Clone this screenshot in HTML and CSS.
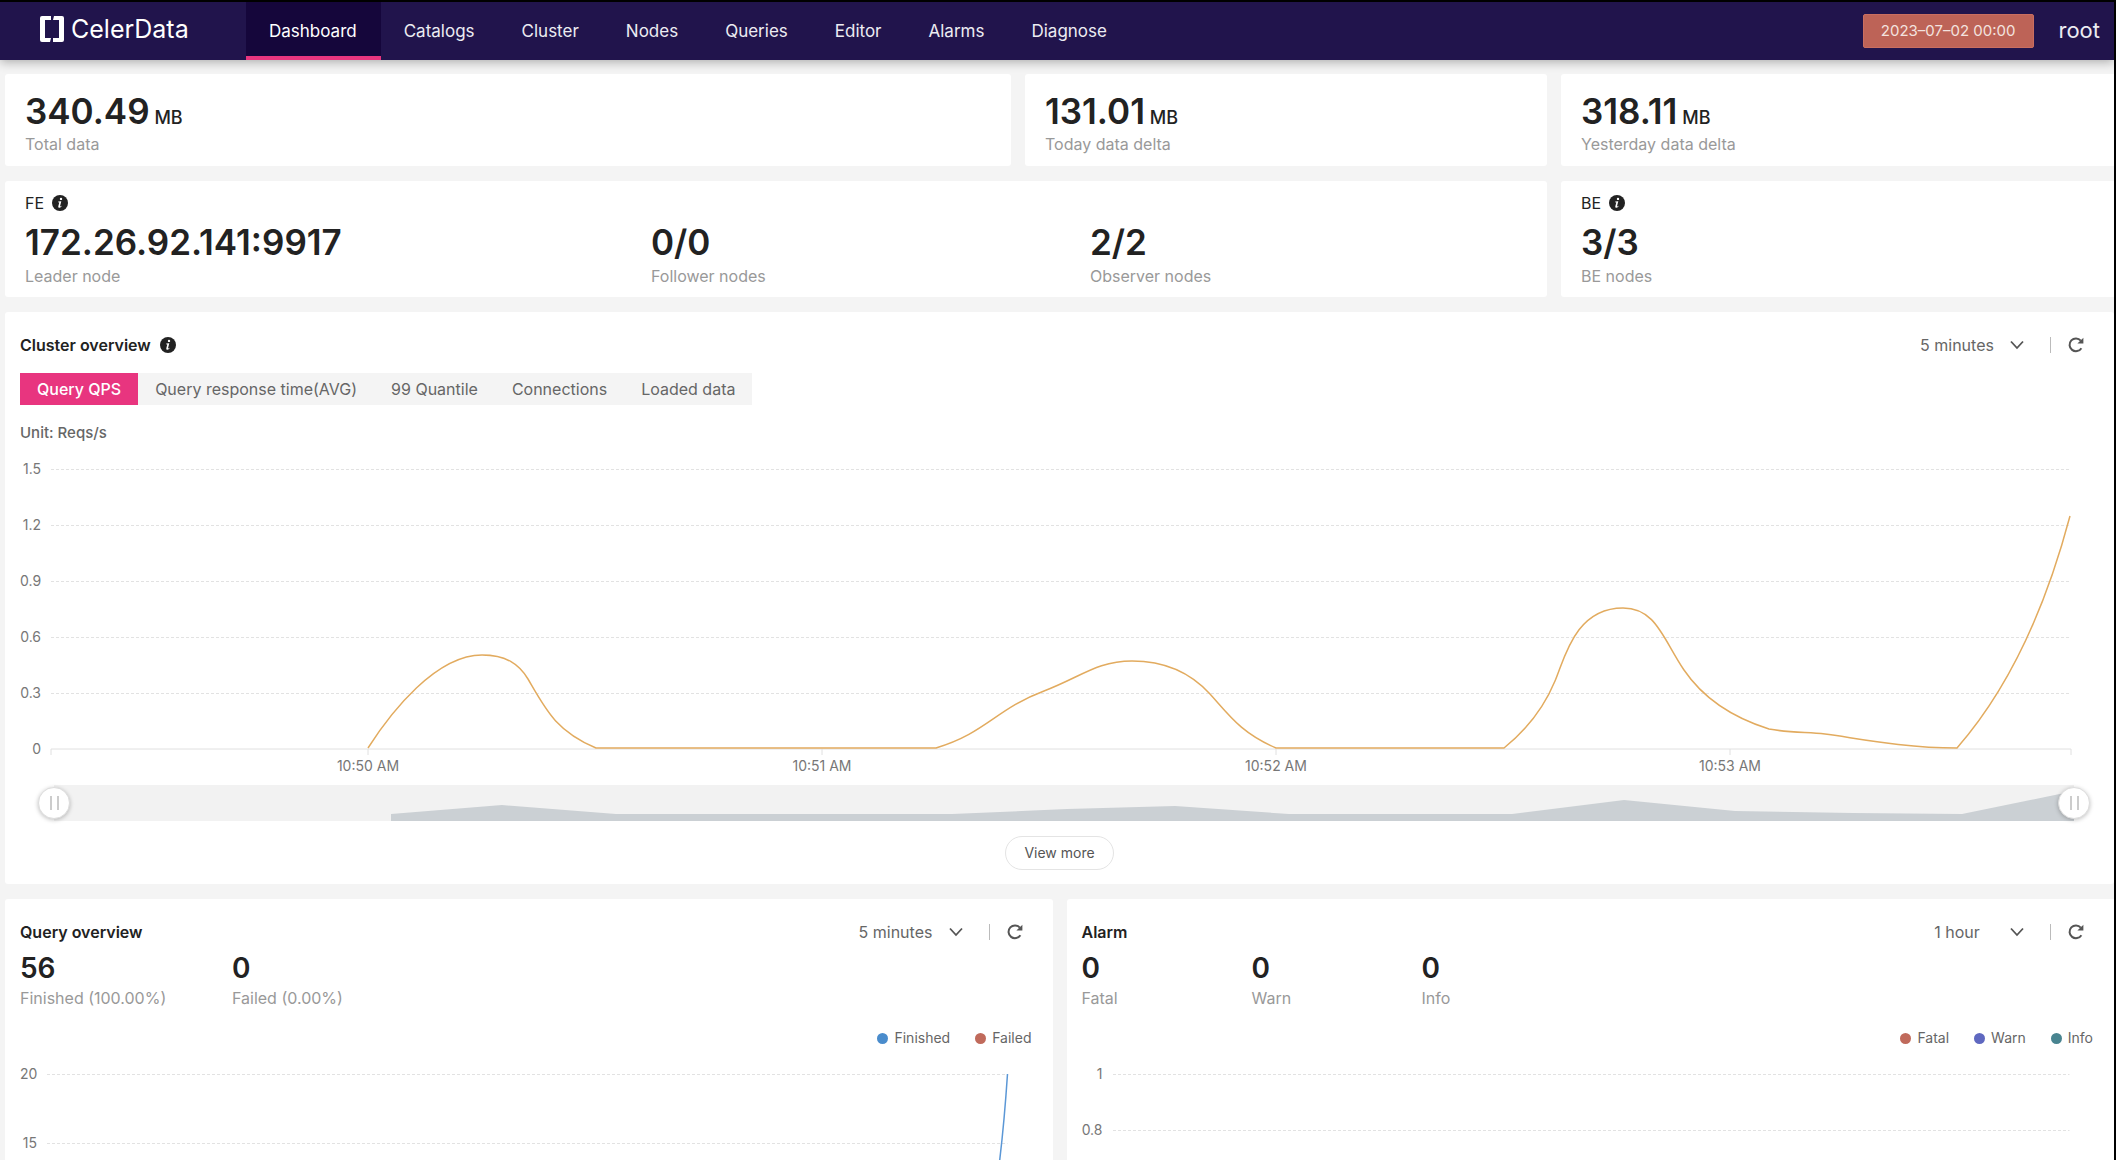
FILE: index.html
```html
<!DOCTYPE html>
<html lang="en">
<head>
<meta charset="utf-8">
<title>CelerData Dashboard</title>
<link rel="stylesheet" href="styles.css">
</head>
<body>
<svg class="defs" aria-hidden="true">
  <symbol id="i-info" viewBox="0 0 16 16">
    <circle cx="8" cy="8" r="8" fill="#222"/>
    <circle cx="9" cy="3.9" r="1.2" fill="#fff"/>
    <path d="M6.3 6.6L9.3 6.3L8 11.2Q8 11.7 9.4 10.8L9.6 11.2Q8.2 12.9 6.9 12.7Q6 12.4 6.3 11.2L7.3 7.4L6.1 7.2Z" fill="#fff"/>
  </symbol>
  <symbol id="i-chevron" viewBox="0 0 14 10">
    <path d="M1 1.5L7 8L13 1.5" fill="none" stroke="#555" stroke-width="1.8"/>
  </symbol>
  <symbol id="i-refresh" viewBox="0 0 16 16">
    <path d="M13.4 11.2A6.4 6.4 0 1 1 12.8 3.6" fill="none" stroke="#555" stroke-width="2"/>
    <path d="M15.4 0.8V6.6H9.4Z" fill="#555"/>
  </symbol>
</svg>

<header class="header">
  <a class="logo" href="#">
    <svg class="logo-mark" viewBox="0 0 24 26" aria-hidden="true">
      <path d="M11 0H2Q0 0 0 2V24Q0 26 2 26H10L11 22H5V4H11Z" fill="#fff"/>
      <path d="M14 0H22Q24 0 24 2V24Q24 26 22 26H13V22H19V4H13Z" fill="#fff"/>
    </svg>
    <span>CelerData</span>
  </a>
  <nav class="nav">
    <a class="active" href="#">Dashboard</a>
    <a href="#">Catalogs</a>
    <a href="#">Cluster</a>
    <a href="#">Nodes</a>
    <a href="#">Queries</a>
    <a href="#">Editor</a>
    <a href="#">Alarms</a>
    <a href="#">Diagnose</a>
  </nav>
  <button class="expiry" type="button">2023–07–02 00:00</button>
  <a class="user" href="#">root</a>
</header>

<main class="main">
  <section class="row totals">
    <div class="card stat-card"><p class="big">340.49 <small>MB</small></p><p class="label">Total data</p></div>
    <div class="card stat-card"><p class="big">131.01 <small>MB</small></p><p class="label">Today data delta</p></div>
    <div class="card stat-card"><p class="big">318.11 <small>MB</small></p><p class="label">Yesterday data delta</p></div>
  </section>

  <section class="row nodes">
    <div class="card node-card">
      <h2 class="kind">FE <svg class="info"><use href="#i-info"/></svg></h2>
      <div class="fe-grid">
        <div><p class="big">172.26.92.141:9917</p><p class="label">Leader node</p></div>
        <div><p class="big">0/0</p><p class="label">Follower nodes</p></div>
        <div><p class="big">2/2</p><p class="label">Observer nodes</p></div>
      </div>
    </div>
    <div class="card node-card">
      <h2 class="kind">BE <svg class="info"><use href="#i-info"/></svg></h2>
      <p class="big">3/3</p><p class="label">BE nodes</p>
    </div>
  </section>

  <section class="card panel cluster">
    <div class="panel-head">
      <h2>Cluster overview <svg class="info"><use href="#i-info"/></svg></h2>
      <div class="tools">
        <div class="select"><select aria-label="Cluster overview period"><option>5 minutes</option><option>1 hour</option></select><svg><use href="#i-chevron"/></svg></div>
        <span class="divider"></span>
        <button class="refresh" type="button" aria-label="Refresh"><svg><use href="#i-refresh"/></svg></button>
      </div>
    </div>
    <div class="tabs">
      <button class="active" type="button">Query QPS</button>
      <button type="button">Query response time(AVG)</button>
      <button type="button">99 Quantile</button>
      <button type="button">Connections</button>
      <button type="button">Loaded data</button>
    </div>
    <p class="unit">Unit: Reqs/s</p>
    <div class="chart">
      <div class="y-axis"><span>1.5</span><span>1.2</span><span>0.9</span><span>0.6</span><span>0.3</span><span>0</span></div>
      <svg class="plot" viewBox="0 0 2020 280" preserveAspectRatio="none" role="img" aria-label="Query QPS">
        <path class="grid" d="M0 0.5H2020M0 56.5H2020M0 112.5H2020M0 168.5H2020M0 224.5H2020"/>
        <path class="axis" d="M0 280H2020M0 280V286M317 280V286M771 280V286M1225 280V286M1679 280V286M2020 280V286"/>
        <path class="line orange" d="M317 279C340 243 385 186 431 186C455 186 468 195 477 210C495 241 505 262 545 279H885C935 264 945 240 993 222C1030 208 1046 192 1081 192C1112 192 1138 202 1159 225C1178 246 1190 264 1225 279H1453C1478 259 1494 236 1504 212C1513 192 1523 139 1572 139C1605 139 1612 170 1633 201C1652 229 1680 248 1718 260C1740 264 1755 263 1774 265C1800 268 1850 279 1906 279C1955 223 1993 145 2019 47"/>
      </svg>
    </div>
    <div class="x-axis"><span></span><span>10:50 AM</span><span>10:51 AM</span><span>10:52 AM</span><span>10:53 AM</span><span></span></div>
    <div class="zoom-range">
      <svg viewBox="0 0 2020 36" preserveAspectRatio="none" aria-hidden="true">
        <path d="M337 36V29L448 20L562 29H898L1013 24L1121 21L1235 29H1458L1570 15L1681 26L1799 28L1908 29L2020 6V36Z" fill="#cbd0d4"/>
      </svg>
      <input type="range" min="0" max="100" value="0" aria-label="Range start">
      <input type="range" min="0" max="100" value="100" aria-label="Range end">
    </div>
    <button class="more" type="button">View more</button>
  </section>

  <section class="row bottom">
    <div class="card panel">
      <div class="panel-head">
        <h2>Query overview</h2>
        <div class="tools">
          <div class="select"><select aria-label="Query overview period"><option>5 minutes</option><option>1 hour</option></select><svg><use href="#i-chevron"/></svg></div>
          <span class="divider"></span>
          <button class="refresh" type="button" aria-label="Refresh"><svg><use href="#i-refresh"/></svg></button>
        </div>
      </div>
      <div class="counts wide">
        <div><p class="mid">56</p><p class="label">Finished (100.00%)</p></div>
        <div><p class="mid">0</p><p class="label">Failed (0.00%)</p></div>
      </div>
      <ul class="legend">
        <li class="finished">Finished</li>
        <li class="fatal">Failed</li>
      </ul>
      <div class="chart small query">
        <div class="y-axis"><span>20</span><span>15</span></div>
        <svg class="plot" viewBox="0 0 960 276" preserveAspectRatio="none" role="img" aria-label="Finished and failed queries">
          <path class="grid" d="M0 0.5H960M0 69.5H960M0 138.5H960M0 207.5H960"/>
          <path class="axis" d="M0 276H960"/>
          <path class="line blue" d="M960 0C958 30 956 55 952 88C946 145 930 230 900 275"/>
        </svg>
      </div>
    </div>
    <div class="card panel">
      <div class="panel-head">
        <h2>Alarm</h2>
        <div class="tools">
          <div class="select"><select aria-label="Alarm period"><option>1 hour</option><option>5 minutes</option></select><svg><use href="#i-chevron"/></svg></div>
          <span class="divider"></span>
          <button class="refresh" type="button" aria-label="Refresh"><svg><use href="#i-refresh"/></svg></button>
        </div>
      </div>
      <div class="counts">
        <div><p class="mid">0</p><p class="label">Fatal</p></div>
        <div><p class="mid">0</p><p class="label">Warn</p></div>
        <div><p class="mid">0</p><p class="label">Info</p></div>
      </div>
      <ul class="legend">
        <li class="fatal">Fatal</li>
        <li class="warn">Warn</li>
        <li class="notice">Info</li>
      </ul>
      <div class="chart small">
        <div class="y-axis"><span>1</span><span>0.8</span></div>
        <svg class="plot" viewBox="0 0 960 280" preserveAspectRatio="none" role="img" aria-label="Alarms">
          <path class="grid" d="M0 0.5H960M0 56.5H960M0 112.5H960M0 168.5H960M0 224.5H960"/>
          <path class="axis" d="M0 280H960"/>
        </svg>
      </div>
    </div>
  </section>
</main>
</body>
</html>
```
FILE: styles.css
```css
* { box-sizing: border-box; }

body {
  margin: 0;
  height: 100vh;
  overflow: hidden;
  border-top: 2px solid #000;
  border-right: 2px solid #000;
  background: #f4f4f4;
  color: #222;
  font-family: Inter, "Liberation Sans", sans-serif;
  font-size: 16px;
  line-height: 20px;
}

h2, p, ul { margin: 0; padding: 0; }
h2 { font-size: 16px; font-weight: 600; }
a { color: inherit; text-decoration: none; }
button, select {
  margin: 0;
  padding: 0;
  border: 0;
  background: none;
  color: inherit;
  font: inherit;
}
.defs { display: none; }

/* Header */
.header {
  display: flex;
  align-items: center;
  height: 58px;
  padding-right: 14px;
  background: #21144c;
  color: #ececf2;
  box-shadow: 0 2px 10px rgba(0, 0, 0, 0.3);
}
.logo {
  display: flex;
  align-items: center;
  gap: 7px;
  width: 246px;
  padding: 0 0 4px 40px;
  color: #fff;
  font-size: 25px;
}
.logo-mark { width: 24px; height: 26px; }
.nav { display: flex; align-self: stretch; margin-right: auto; font-size: 17px; }
.nav a { display: flex; align-items: center; padding: 0 24px 0 23px; }
.nav .active { background: #15063b; box-shadow: inset 0 -4px #e8357f; color: #fff; }
.expiry {
  height: 34px;
  padding: 0 17px;
  border: 1px solid #c96e60;
  border-radius: 2px;
  background: #bd6357;
  color: #f3e2df;
  font-size: 15px;
}
.user { margin-left: 25px; padding-bottom: 2px; font-size: 22px; }

/* Cards */
.main { display: flex; flex-direction: column; gap: 15px; padding: 14px 0 0 5px; }
.row { display: grid; column-gap: 14px; }
.totals { grid-template-columns: 1006fr 522fr 553fr; }
.nodes { grid-template-columns: 1542fr 553fr; }
.bottom { grid-template-columns: 1fr 1fr; }
.card { min-width: 0; background: #fff; border-radius: 3px 0 0 3px; }
.card:not(:last-child) { border-radius: 3px; }
.stat-card { padding: 17px 20px 10px; }
.node-card { padding: 12px 20px 9px; }
.big { margin-bottom: 2px; font-size: 35px; line-height: 40px; font-weight: 600; }
.big small { margin-left: -4px; font-size: 18px; line-height: 20px; font-weight: 500; }
.label { color: #999; line-height: 23px; }
.kind { display: flex; align-items: center; gap: 8px; font-weight: 400; }
.info { width: 16px; height: 16px; }
.node-card .big { margin-top: 8px; line-height: 42px; }
.fe-grid { display: grid; grid-template-columns: 626fr 439fr 437fr; }

/* Panels */
.panel { padding: 23px 15px 14px; }
.panel-head { display: flex; justify-content: space-between; align-items: center; }
.panel-head h2 { display: flex; align-items: center; gap: 9px; }
.tools { display: flex; align-items: center; padding-right: 15px; color: #666; }
.select { display: grid; grid-template-columns: 74px 14px; column-gap: 16px; align-items: center; }
.select select { grid-area: 1 / 1 / 2 / 3; appearance: none; padding-right: 30px; text-align-last: center; }
.select svg { grid-area: 1 / 2; width: 14px; height: 10px; pointer-events: none; }
.divider { width: 1px; height: 16px; margin: 0 17px 0 26px; background: #bbb; }
.refresh { display: flex; }
.refresh svg { width: 16px; height: 16px; }

.tabs { display: flex; width: fit-content; margin-top: 18px; background: #f4f4f4; color: #666; }
.tabs button { height: 32px; padding: 0 17px; }
.tabs .active { background: #e8357f; color: #fff; font-weight: 500; }
.unit { margin-top: 18px; color: #666; font-size: 15px; font-weight: 500; }

/* Charts */
.chart { display: grid; grid-template-columns: 21px 1fr; column-gap: 10px; margin: 26px 28px 0 0; }
.y-axis {
  display: flex;
  flex-direction: column;
  gap: 36px;
  margin: -10px 0;
  color: #777;
  font-size: 14px;
  text-align: right;
}
.plot { display: block; width: 100%; height: 280px; overflow: visible; }
.plot path { fill: none; vector-effect: non-scaling-stroke; }
.grid { stroke: #e2e2e2; stroke-dasharray: 3 2; }
.axis { stroke: #e0e0e0; }
.orange { stroke: #e2ab5f; stroke-width: 1.5px; }
.blue { stroke: #5b97d6; stroke-width: 1.5px; }
.x-axis {
  display: grid;
  grid-template-columns: 90fr repeat(4, 454fr) 114fr;
  margin: 7px 28px 0 31px;
  color: #777;
  font-size: 14px;
  text-align: center;
}

/* Range slider under the main chart */
.zoom-range { display: grid; align-items: center; margin: 9px 25px 0 34px; background: #f2f2f2; }
.zoom-range > * { grid-area: 1 / 1; }
.zoom-range svg { width: 100%; height: 36px; }
.zoom-range input {
  appearance: none;
  width: calc(100% + 32px);
  height: 32px;
  margin: 0 -16px;
  background: none;
  pointer-events: none;
}
.zoom-range input::-webkit-slider-thumb {
  appearance: none;
  width: 32px;
  height: 32px;
  border: 1px solid #ddd;
  border-radius: 50%;
  background:
    linear-gradient(#ccc, #ccc) 11px 8px / 2px 14px no-repeat,
    linear-gradient(#ccc, #ccc) 18px 8px / 2px 14px no-repeat,
    #fff;
  box-shadow: 0 1px 4px rgba(0, 0, 0, 0.25);
  pointer-events: auto;
}
.more {
  display: block;
  height: 34px;
  margin: 15px auto 0;
  padding: 0 18px;
  border: 1px solid #e4e4e4;
  border-radius: 17px;
  color: #555;
  font-size: 14px;
}

/* Lower panels */
.counts { display: grid; grid-template-columns: repeat(3, 170px); margin-top: 7px; }
.counts.wide { grid-template-columns: repeat(2, 212px); }
.mid { font-size: 28px; line-height: 38px; font-weight: 600; }
.legend {
  display: flex;
  justify-content: flex-end;
  gap: 25px;
  margin-top: 18px;
  padding-right: 6px;
  list-style: none;
  color: #666;
  font-size: 14px;
}
.legend li { display: flex; align-items: center; gap: 6px; }
.legend li::before { content: ""; width: 11px; height: 11px; border-radius: 50%; background: var(--series); }
.finished { --series: #4a8ccc; }
.fatal { --series: #c06a5b; }
.warn { --series: #5f68c0; }
.notice { --series: #488490; }
.small { margin-right: 30px; }
.query { grid-template-columns: 17px 1fr; }
.query .y-axis { gap: 49px; }
.query .plot { height: 276px; }
```
